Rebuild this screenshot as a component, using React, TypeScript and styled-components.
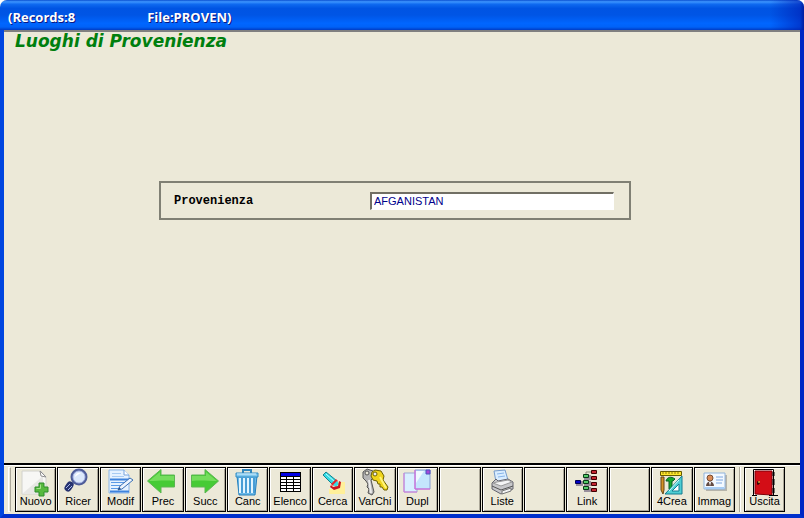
import React from "react";
import styled, { createGlobalStyle } from "styled-components";

const GlobalStyle = createGlobalStyle`
  *, *::before, *::after { box-sizing: border-box; }
  body { margin: 0; background: #fff; font-family: "Liberation Sans", Arial, sans-serif; }
`;

const Window = styled.div`
  display: flex;
  flex-direction: column;
  min-height: 100vh;
  border-radius: 7px 7px 0 0;
  background: #ece9d8;
  overflow: hidden;
`;

const TitleBar = styled.header`
  display: flex;
  align-items: center;
  gap: 72px;
  height: 30px;
  padding: 4px 8px 0;
  background:
    linear-gradient(to right, transparent calc(100% - 34px), rgba(0, 30, 180, 0.6) calc(100% - 4px), #001ea0),
    linear-gradient(#0a4fd0 0, #3d95ff 6%, #0f6af0 14%, #0054e3 28%, #0055e5 50%, #0066ff 78%, #0062f8 90%, #003cc4 100%);
  color: #fff;
  font: bold 13px/16px "Open Sans", "Noto Sans", sans-serif;
  text-shadow: 1px 1px #0a1883;
  white-space: pre;
`;

const Frame = styled.div`
  display: flex;
  flex: 1;
  flex-direction: column;
  border: 4px solid #0046e0;
  border-top: 0;
  border-right-color: #0026c4;
  border-bottom-color: #0030cc;
`;

const Content = styled.main`
  flex: 1;
  border-top: 2px solid #808080;
`;

const Heading = styled.h1`
  margin: 0;
  padding-left: 11px;
  color: #007f0e;
  font: italic bold 17px/18px "DejaVu Sans", Verdana, sans-serif;
`;

const FormArea = styled.form`
  display: flex;
  justify-content: center;
  padding: 131px 14px 24px 0;
`;

const FieldPanel = styled.div`
  display: flex;
  align-items: center;
  width: 100%;
  max-width: 472px;
  padding: 9px 15px 8px 13px;
  border: 2px solid #808074;
`;

const FieldLabel = styled.label`
  width: 196px;
  color: #000;
  font: bold 12px/16px "Liberation Mono", "Courier New", monospace;
`;

const TextField = styled.input`
  flex: 1;
  min-width: 0;
  height: 18px;
  padding: 0 2px 2px;
  border: 1px solid #fff;
  border-top: 2px solid #716f64;
  border-left: 2px solid #716f64;
  border-radius: 0;
  outline: 0;
  background: #fff;
  color: #00008b;
  font: 11px/13px "Liberation Sans", Arial, sans-serif;
`;

const ToolBar = styled.footer`
  display: flex;
  padding: 2px 15px 2px 4px;
  border-top: 2px solid #000;
  box-shadow: inset 0 1px #fff;
`;

const Grip = styled.span`
  width: 3px;
  margin-right: 4px;
  border: 1px solid #fff;
  border-right-color: #aca899;
`;

const ToolGroup = styled.div`
  display: grid;
  flex: 1;
  grid-template-columns: repeat(17, minmax(0, 1fr));
  gap: 1px;
`;

const Divider = styled.span`
  width: 2px;
  margin: 0 3px 0 4px;
  border-left: 1px solid #aca899;
  border-right: 1px solid #fff;
`;

const ToolButton = styled.button`
  display: flex;
  flex-direction: column;
  align-items: center;
  min-width: 0;
  height: 45px;
  padding: 0;
  border: 1px solid #000;
  border-radius: 0;
  background: #ece9d8;
  box-shadow: inset 1px 1px #fff, inset -1px -1px #aca899;
  color: #000;
  font: 11px/13px "Liberation Sans", Arial, sans-serif;
`;

const ExitButton = styled(ToolButton)`
  flex: 0 0 41px;
`;

const IconArt = styled.svg`
  display: block;
  flex: none;
  width: 39px;
  height: 27px;
  overflow: visible;
`;

const NewIcon = () => (
  <>
    <path d="M6 3h19l5 6v17H6z" fill="#f7f7f5" stroke="#d2d2cd" />
    <path d="M6 26 27 8v18z" fill="#e7e7e4" />
    <path d="m24 3 1 5 5 1z" fill="#fff" stroke="#8e8e8e" />
    <path d="M23 15h5v4h4v5h-4v4h-5v-4h-4v-5h4z" fill="#58b93f" stroke="#2f8d2c" />
    <path d="M24.500 16.500v4h-4" fill="none" stroke="#a5e38c" />
  </>
);

const SearchIcon = () => (
  <>
    <path d="m15 14-3 3" stroke="#8290b0" strokeWidth="3" />
    <path d="m11 17-2 3" stroke="#27336f" strokeWidth="7" strokeLinecap="round" />
    <path d="m11 16-4 4M13 18l-4 4" stroke="#a8b8ec" />
    <circle cx="20" cy="9" r="7" fill="#dcecff" stroke="#4e5c98" strokeWidth="3" />
    <circle cx="20" cy="9" r="6" fill="#dce8fb" stroke="#a8b6e6" />
    <path d="M16 9c0-3 3-5 6-4-2 1-4 2-6 4z" fill="#fff" />
  </>
);

const EditIcon = () => (
  <>
    <path d="M8 2h15l5 5v18H8z" fill="#e6f2ff" stroke="#8ab5e8" />
    <path d="M23 2v5h5" fill="#fff" stroke="#78a4dc" />
    <path d="M11 5.500h9M11 8.500h12" stroke="#a8cbf2" />
    <path d="M9 11.500h19M9 23.500h19" stroke="#3f83dd" strokeWidth="2" />
    <path d="M10 14.500h16M10 17.500h11M10 20.500h9" stroke="#5b9ae6" />
    <path d="m17 22 2-4L29 10l3 2-11 9z" fill="#eef5fd" stroke="#396fb5" />
    <path d="m17 22 3-1-2-2z" fill="#264c80" />
  </>
);

const PreviousIcon = () => (
  <>
    <path d="M4.500 13 18 1.500V7h13.500v12H18v6z" fill="#46cb35" stroke="#5cb653" strokeLinejoin="round" />
    <path d="M6 13 17 4v4h14v5c-9-1-16 0-25 0z" fill="#74dd5c" />
  </>
);

const NextIcon = () => (
  <g transform="translate(37 0) scale(-1 1)">
    <PreviousIcon />
  </g>
);

const TrashIcon = () => (
  <>
    <path d="M9 8h20l-2 19H11z" fill="#6bb9e8" stroke="#2580bd" />
    <path d="M12 10v15M16 10v15M20 10v15M24 10v15" stroke="#e1f5ff" strokeWidth="2" />
    <path d="M14 10v15M18 10v15M22 10v15M26 10v15" stroke="#2782c3" />
    <path d="M8 5h22v4H8z" fill="#82c9ef" stroke="#2e8bc4" />
    <path d="M15 5V2h8v3" fill="none" stroke="#3186bb" strokeWidth="2" />
    <path d="M9 6h19" stroke="#d5f1ff" />
  </>
);

const ListIcon = () => (
  <>
    <path d="M9 4h21v20H9z" fill="#000" />
    <path d="M10 5h19v3H10z" fill="#0000e4" />
    <path d="M10 9h5v2h-5zm6 0h6v2h-6zm7 0h6v2h-6zM10 12h5v2h-5zm6 0h6v2h-6zm7 0h6v2h-6zM10 15h5v2h-5zm6 0h6v2h-6zm7 0h6v2h-6zM10 18h5v2h-5zm6 0h6v2h-6zm7 0h6v2h-6zM10 21h5v2h-5zm6 0h6v2h-6zm7 0h6v2h-6z" fill="#fff" />
  </>
);

const TorchIcon = () => (
  <>
    <path d="M24 14h8v12H16v-5h6z" fill="#fff09a" />
    <path d="m10 7 3-3 11 9-4 4z" fill="#35dbe4" stroke="#178490" />
    <path d="m13 6 9 8" stroke="#c3ffff" />
    <path d="m18 16 5-5 2 2-5 5z" fill="#e6262c" />
    <path d="m20 17 4-4 2 3-3 3z" fill="#35dbe4" />
    <path d="m18 17 2 2 5-1 1-5 2 1-1 6-6 2-4-3z" fill="#c9141f" />
  </>
);

const KeysIcon = () => (
  <>
    <path d="m8 4 4-3 6 2 1 6-3 3 3 12-2 3-4-2 1-4-2-2 1-3-2-3-3-3z" fill="#b5b5b5" stroke="#555" />
    <circle cx="12" cy="5" r="2" fill="#ece9d8" stroke="#555" />
    <path d="m14 12 2 13" stroke="#eee" strokeWidth="2" />
    <path d="m17 4 3-2 6 1 3 5-1 4 5 7-1 3h-3l-2-3h-2v-3h-2l-1-3-4-1-2-4z" fill="#f0d51b" stroke="#6d6100" />
    <circle cx="20" cy="6" r="2" fill="#eee" stroke="#6d6100" />
    <path d="m25 9 6 11" stroke="#fff47a" strokeWidth="2" />
  </>
);

const DuplicateIcon = () => (
  <>
    <path d="M6 5h13v19H6z" fill="#d8efff" stroke="#9aa9d3" />
    <path d="M6 5v19h13" fill="none" stroke="#d678dd" />
    <path d="M17 2h15v19H17z" fill="#c4e5fd" stroke="#889ed4" />
    <path d="M18 3h8L18 15z" fill="#eff9ff" />
    <path d="M17 2v19h15" fill="none" stroke="#e35adb" />
    <path d="M28 2h4v4h-4z" fill="#a747d9" stroke="#4a54bf" />
  </>
);

const PrinterIcon = () => (
  <>
    <path d="m11 3 11-1 3 10-12 2z" fill="#d9edff" stroke="#769ccd" />
    <path d="m14 6 7-1M15 9l7-1" stroke="#88b5ea" />
    <path d="m9 15 4-4 2 2 10-2 5 3v7l-12 5-9-5z" fill="#c7c7ca" stroke="#656570" />
    <path d="m10 15 8 3 11-4-4-2-11 2z" fill="#f5f5f6" stroke="#999" />
    <path d="m9 18 9 4 12-4" fill="none" stroke="#555" />
    <path d="m19 23 9-3v3l-9 3z" fill="#f3f3f3" stroke="#777" />
  </>
);

const LinkIcon = () => (
  <>
    <path d="M13 14h10M18 8V4h5M18 10h5M18 16h5M18 21v2h5" fill="none" stroke="#888877" />
    <g fill="#998f9b">
      <path d="M8 13h7v5H8zM16 7h7v5h-7zm0 6h7v5h-7zm0 6h7v5h-7z" />
    </g>
    <path d="M7.500 12.500h5v3h-5z" fill="#0000c6" stroke="#000056" />
    <g fill="#55cc69" stroke="#073b16">
      <path d="M15.500 6.500h5v3h-5zM15.500 12.500h5v3h-5zM15.500 18.500h5v3h-5z" />
    </g>
    <g fill="#c52631" stroke="#3f0000">
      <path d="M23.500 2.500h5v3h-5zM23.500 8.500h5v3h-5zM23.500 14.500h5v3h-5zM23.500 20.500h5v3h-5z" />
    </g>
  </>
);

const DesignIcon = () => (
  <>
    <path d="M8.500 3.500h21v4h-21z" fill="#ffe72b" stroke="#675b00" />
    <path d="M11 4v2M14 4v2M17 4v2M20 4v2M23 4v2M26 4v2" stroke="#8a7b12" />
    <path d="M9 9h3v13l-1 4-2-4z" fill="#d29125" stroke="#674414" />
    <path d="M14 13c1-4 5-5 9-2l-2 2h-1v8h-3v-8z" fill="#16a82c" stroke="#075f22" />
    <path d="M30 8v18H13z" fill="#4fced3" stroke="#137c91" />
    <path d="M27 16v7h-7z" fill="#fff" stroke="#137c91" />
    <path d="m17 23 10-11" stroke="#d8ffff" />
  </>
);

const CardIcon = () => (
  <>
    <path d="M11 7h21v16H11z" fill="#b6b4aa" />
    <path d="M9 5h21v16H9z" fill="#f3f9ff" stroke="#91b4dc" />
    <path d="M10 20h19" stroke="#a8cdf4" strokeWidth="2" />
    <circle cx="15" cy="10" r="3" fill="#dc8c55" stroke="#754b31" />
    <path d="M11 18c0-6 8-6 8 0z" fill="#634b43" />
    <path d="m14 14 1 4 1-4z" fill="#fff" />
    <path d="M21 9h7M21 12h7M21 15h6" stroke="#7ca6df" />
  </>
);

const DoorIcon = () => (
  <>
    <path d="M8.500 27V1.500h20V27" fill="#fff" stroke="#000" />
    <path d="M10 3h17v24l-17-1z" fill="#d30d16" stroke="#7c0008" />
    <path d="M28.500 4v4M28.500 11v6M28.500 20v5" stroke="#000" strokeWidth="2" />
    <path d="M13 13v4M12 15h3" stroke="#000" />
    <path d="M14 13v2" stroke="#ffeb46" />
    <path d="M7 27.500h5M24 27.500h9" stroke="#000" />
  </>
);

type Tool = { label: string; Art?: React.ComponentType };

const tools: Tool[] = [
  { label: "Nuovo", Art: NewIcon },
  { label: "Ricer", Art: SearchIcon },
  { label: "Modif", Art: EditIcon },
  { label: "Prec", Art: PreviousIcon },
  { label: "Succ", Art: NextIcon },
  { label: "Canc", Art: TrashIcon },
  { label: "Elenco", Art: ListIcon },
  { label: "Cerca", Art: TorchIcon },
  { label: "VarChi", Art: KeysIcon },
  { label: "Dupl", Art: DuplicateIcon },
  { label: "" },
  { label: "Liste", Art: PrinterIcon },
  { label: "" },
  { label: "Link", Art: LinkIcon },
  { label: "" },
  { label: "4Crea", Art: DesignIcon },
  { label: "Immag", Art: CardIcon },
];

const Icon = ({ Art }: { Art: React.ComponentType }) => (
  <IconArt viewBox="0 0 39 27" aria-hidden="true">
    <Art />
  </IconArt>
);

export default function App() {
  return (
    <>
      <GlobalStyle />
      <Window>
        <TitleBar>
          <span>(Records:8</span>
          <span>File:PROVEN)</span>
        </TitleBar>
        <Frame>
          <Content>
            <Heading>Luoghi di Provenienza</Heading>
            <FormArea onSubmit={(event) => event.preventDefault()}>
              <FieldPanel>
                <FieldLabel htmlFor="provenienza">Provenienza</FieldLabel>
                <TextField id="provenienza" type="text" defaultValue="AFGANISTAN" />
              </FieldPanel>
            </FormArea>
          </Content>
          <ToolBar>
            <Grip />
            <ToolGroup>
              {tools.map(({ label, Art }, index) => (
                <ToolButton key={index} type="button">
                  {Art && <Icon Art={Art} />}
                  {label}
                </ToolButton>
              ))}
            </ToolGroup>
            <Divider />
            <ExitButton type="button">
              <Icon Art={DoorIcon} />
              Uscita
            </ExitButton>
          </ToolBar>
        </Frame>
      </Window>
    </>
  );
}
